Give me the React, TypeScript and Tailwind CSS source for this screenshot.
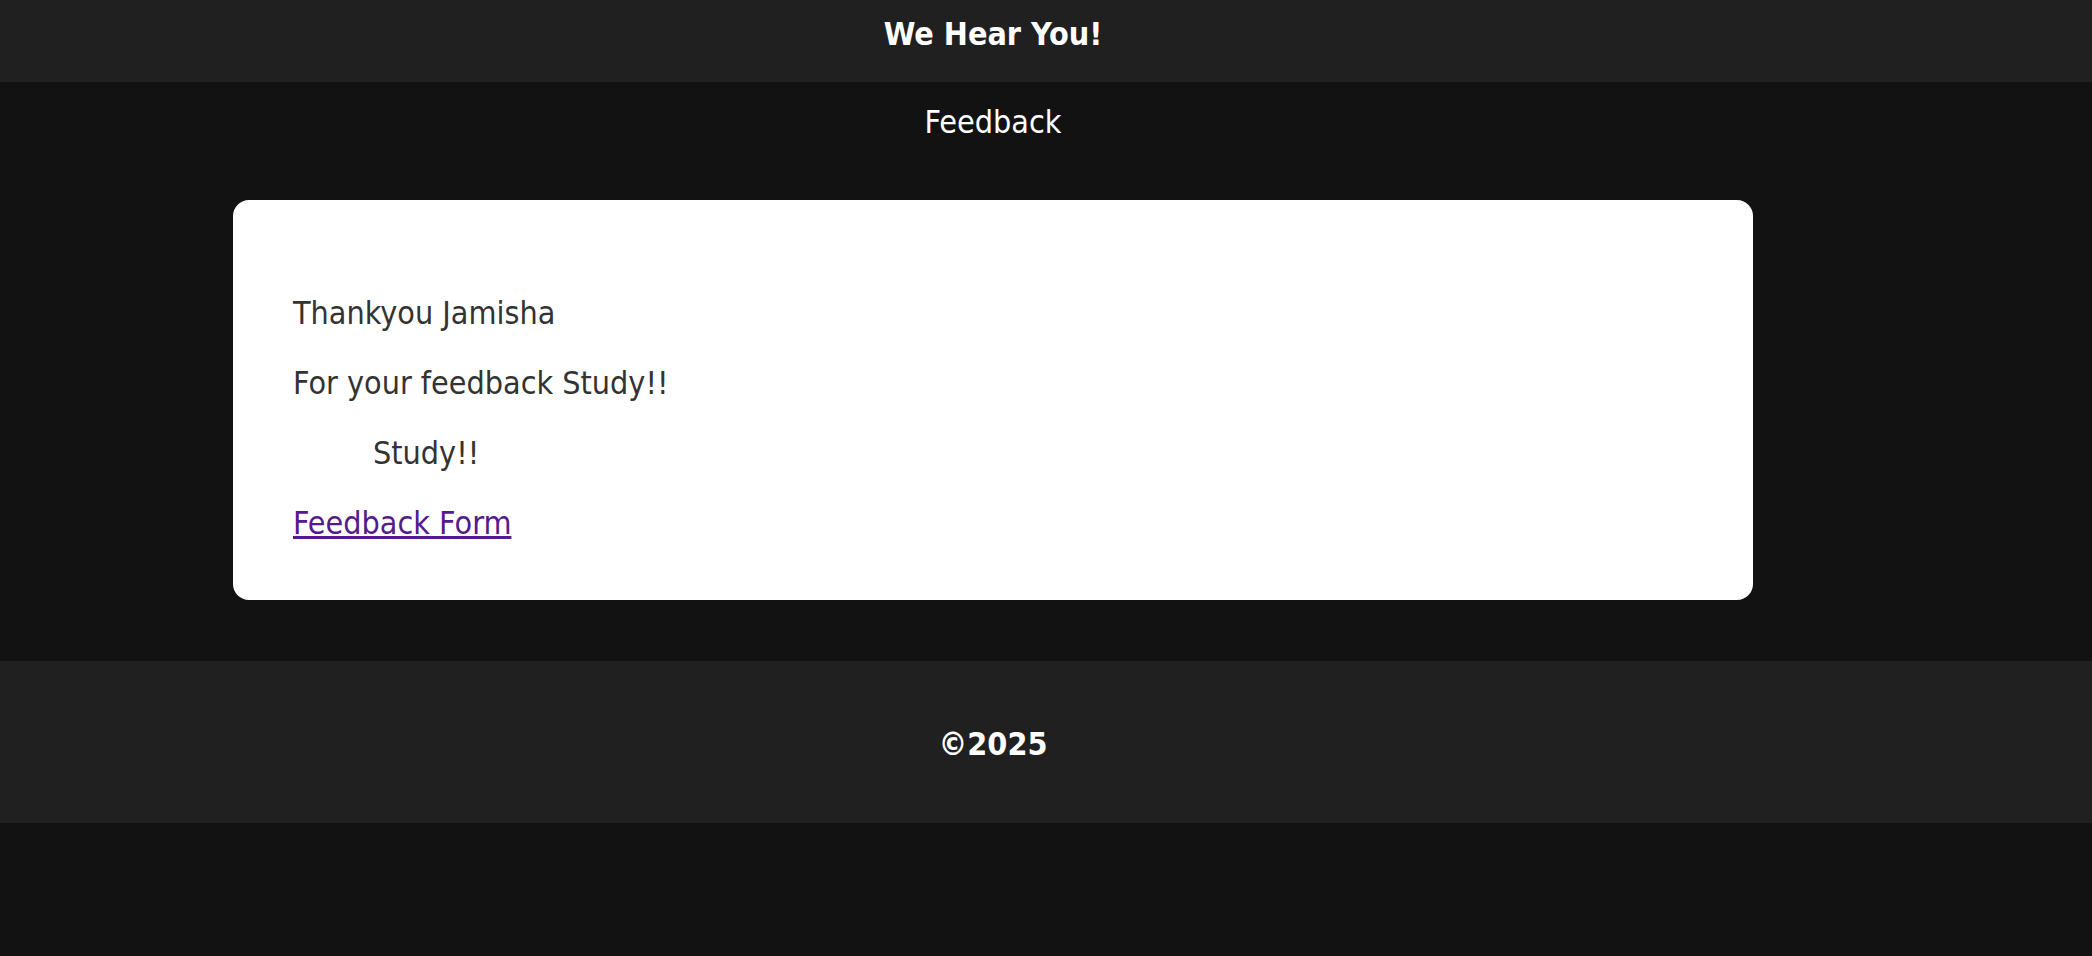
export default function App() {
  return (
    <div className="min-h-screen bg-[#121212] font-['Tahoma','DejaVu_Sans_Condensed','DejaVu_Sans',sans-serif]">
      <header className="h-[82px] bg-[#202020]">
        <div className="w-[1986px] pt-[15px] text-center">
          <h1 className="text-[32px] leading-[38px] font-bold text-white">We Hear You!</h1>
        </div>
      </header>

      <main className="w-[1986px] pt-[21px] pb-[61px]">
        <h2 className="text-center text-[32px] leading-[38px] text-white">Feedback</h2>

        <div className="mx-[233px] mt-[59px] rounded-[16px] bg-white px-[60px] pt-[94px] pb-[58px] text-[32px] leading-[38px] text-[#333333]">
          <div className="flex flex-col gap-[32px]">
            <p>Thankyou Jamisha</p>
            <p>For your feedback Study!!</p>
            <p className="pl-[80px]">Study!!</p>
            <p>
              <a href="#" className="text-[#551a8b] underline">
                Feedback Form
              </a>
            </p>
          </div>
        </div>
      </main>

      <footer className="h-[162px] bg-[#202020]">
        <div className="flex h-full w-[1986px] items-center justify-center pt-[4px]">
          <p className="text-[32px] leading-[38px] font-bold text-white">©2025</p>
        </div>
      </footer>
    </div>
  );
}
